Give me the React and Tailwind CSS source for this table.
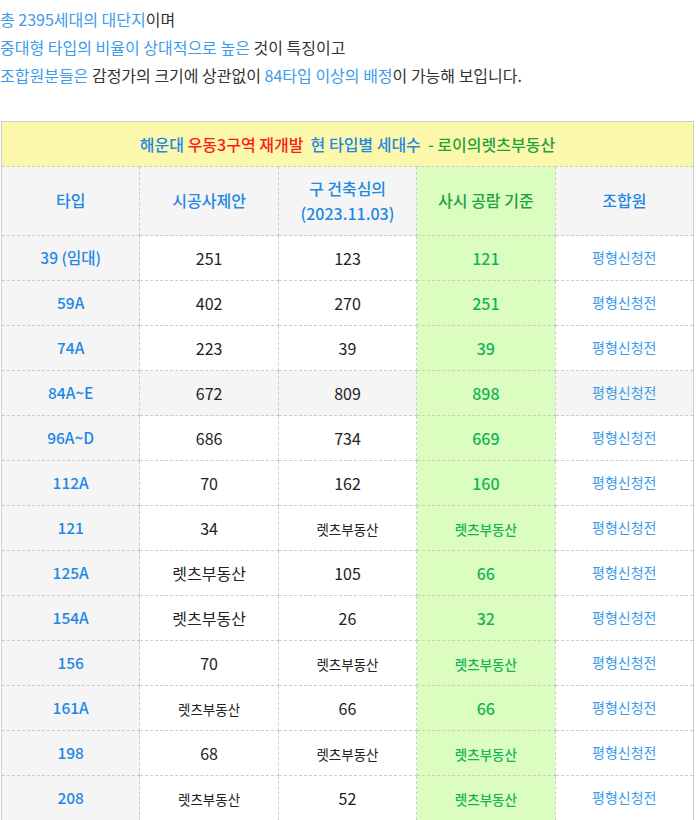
import React from 'react';

// [type, 시공사제안, 구 건축심의, 사시 공람 기준, row highlighted]
const rows = [
  ['39 (임대)', '251', '123', '121'],
  ['59A', '402', '270', '251'],
  ['74A', '223', '39', '39'],
  ['84A~E', '672', '809', '898', true],
  ['96A~D', '686', '734', '669'],
  ['112A', '70', '162', '160'],
  ['121', '34', '렛츠부동산', '렛츠부동산'],
  ['125A', '렛츠부동산!', '105', '66'],
  ['154A', '렛츠부동산!', '26', '32'],
  ['156', '70', '렛츠부동산', '렛츠부동산'],
  ['161A', '렛츠부동산', '66', '66'],
  ['198', '68', '렛츠부동산', '렛츠부동산'],
  ['208', '렛츠부동산', '52', '렛츠부동산'],
];

// a trailing "!" marks the few cells where the word is set at full size
const Val = ({ v }) => {
  const big = v.endsWith('!');
  const text = v.replace('!', '');
  const size = text === '렛츠부동산' && !big ? 'text-[13.5px]' : 'text-[16px]';
  return <span className={size}>{text}</span>;
};

const cell = 'border border-dashed border-[#cccccc] text-center align-middle pb-px';

export default function App() {
  return (
    <div className="bg-white w-[696px] min-h-[820px] text-[#333] font-['Noto_Sans_CJK_KR',sans-serif]">
      <div className="pt-[5px] text-[16px] leading-[28px]">
        <p><span className="text-[#3d9be9]">총 2395세대의 대단지</span>이며</p>
        <p><span className="text-[#3d9be9]">중대형 타입의 비율이 상대적으로 높은</span> 것이 특징이고</p>
        <p>
          <span className="text-[#3d9be9]">조합원분들은</span> 감정가의 크기에 상관없이{' '}
          <span className="text-[#3d9be9]">84타입 이상의 배정</span>이 가능해 보입니다.
        </p>
      </div>

      <table className="mt-[32px] ml-px w-[693px] table-fixed border-collapse border border-solid border-[#cccccc]">
        <tbody>
          <tr className="h-[45px] bg-[#fcf8ab]">
            <td colSpan={5} className={`${cell} text-[16px] font-medium`}>
              <span className="text-[#1e88e5]">해운대 </span>
              <span className="text-[#ff1a1a]">우동3구역 재개발</span>
              <span className="text-[#1e88e5]">&nbsp; 현 타입별 세대수 </span>
              <span className="text-[#1aa33a]">&nbsp;- 로이의렛츠부동산</span>
            </td>
          </tr>
          <tr className="h-[69px] bg-[#f5f5f5] text-[16px] font-medium leading-[25px]">
            <td className={`${cell} text-[#1e88e5]`}>타입</td>
            <td className={`${cell} text-[#1e88e5]`}>시공사제안</td>
            <td className={`${cell} text-[#1e88e5]`}>구 건축심의<br />(2023.11.03)</td>
            <td className={`${cell} text-[#1aa33a] bg-[#dbfdc0]`}>사시 공람 기준</td>
            <td className={`${cell} text-[#1e88e5]`}>조합원</td>
          </tr>
          {rows.map((r, i) => (
            <tr key={i} className={`h-[45px] ${r[4] ? 'bg-[#f5f5f5]' : 'bg-white'}`}>
              <td className={`${cell} bg-[#f5f5f5] text-[15.5px] font-medium text-[#1e88e5]`}>{r[0]}</td>
              <td className={`${cell} text-[#222]`}><Val v={r[1]} /></td>
              <td className={`${cell} text-[#222]`}><Val v={r[2]} /></td>
              <td className={`${cell} bg-[#dbfdc0] font-medium text-[#13b35a]`}><Val v={r[3]} /></td>
              <td className={`${cell} text-[14px] text-[#3d9be9]`}>평형신청전</td>
            </tr>
          ))}
        </tbody>
      </table>
    </div>
  );
}
